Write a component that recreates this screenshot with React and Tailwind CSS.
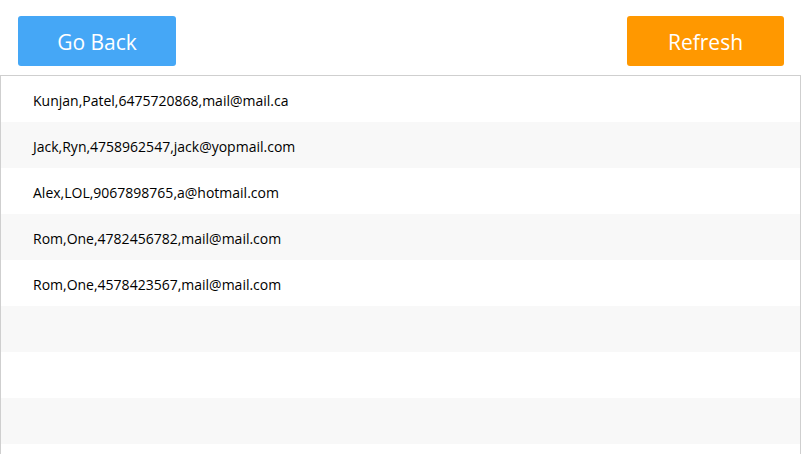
import React from 'react';

const rows = [
  'Kunjan,Patel,6475720868,mail@mail.ca',
  'Jack,Ryn,4758962547,jack@yopmail.com',
  'Alex,LOL,9067898765,a@hotmail.com',
  'Rom,One,4782456782,mail@mail.com',
  'Rom,One,4578423567,mail@mail.com',
  '',
  '',
  '',
  '',
];

const App = () => {
  return (
    <div className="w-[801px] h-[454px] overflow-hidden bg-white" style={{ fontFamily: '"Open Sans", sans-serif' }}>
      <div className="flex justify-between items-start h-[75px] pt-4 pl-[18px] pr-[17px]">
        <button className="w-[158px] h-[50px] pt-[3px] rounded-[3px] bg-[#45a7f6] text-white text-[21px]">Go Back</button>
        <button className="w-[157px] h-[50px] pt-[3px] rounded-[3px] bg-[#ff9800] text-white text-[21px]">Refresh</button>
      </div>
      <div className="w-full border border-[#cfcfcf] border-b-0">
        {rows.map((r, i) => (
          <div
            key={i}
            className={`h-[46px] flex items-center pl-[32px] pt-[2px] text-[14px] text-black ${i % 2 ? 'bg-[#f8f8f8]' : 'bg-white'}`}
          >
            {r}
          </div>
        ))}
      </div>
    </div>
  );
};

export default App;
